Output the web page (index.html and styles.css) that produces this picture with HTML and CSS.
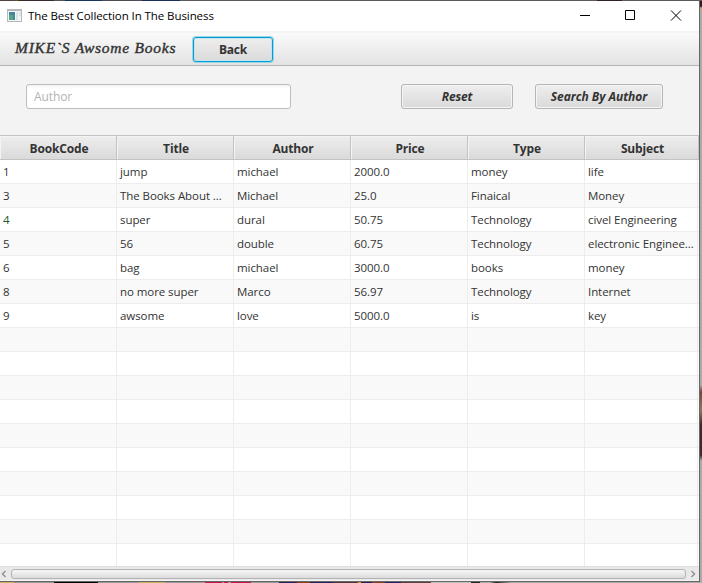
FILE: index.html
```html
<!DOCTYPE html>
<html lang="en">
<head>
<meta charset="utf-8">
<title>The Best Collection In The Business</title>
<link rel="stylesheet" href="styles.css">
</head>
<body>
<div class="desktop">
<main class="window">
  <header class="titlebar">
    <svg class="app-icon" width="15" height="13" viewBox="0 0 15 13"><path fill="#b5b9bb" d="M0 0h15v13H0z"/><path fill="#f4f4f4" d="M1 2h13v10H1z"/><path fill="#4785a0" d="M2 3h6v8H2z"/><path fill="#55a982" d="M2 6h4v5H2z"/><path fill="#dce2e7" d="M9 3h2v8H9zM12 3h2v4h-2z"/></svg>
    <span class="caption">The Best Collection In The Business</span>
    <svg class="controls" width="138" height="30" viewBox="0 0 138 30" fill="none" stroke="#000"><path d="M19 14.500h10M64.500 9.500h9v9h-9zM110 9.500l10 10M120 9.500l-10 10"/></svg>
  </header>
  <nav class="toolbar"><h1>MIKE`S Awsome Books</h1><button class="btn back">Back</button></nav>
  <section class="search">
    <input class="author" type="text" placeholder="Author">
    <button class="btn reset">Reset</button>
    <button class="btn by-author">Search By Author</button>
  </section>
  <section class="table">
    <div class="row head"><span>BookCode</span><span>Title</span><span>Author</span><span>Price</span><span>Type</span><span>Subject</span></div>
    <div class="row"><span>1</span><span>jump</span><span>michael</span><span>2000.0</span><span>money</span><span>life</span></div>
    <div class="row"><span>3</span><span>The Books About ...</span><span>Michael</span><span>25.0</span><span>Finaical</span><span>Money</span></div>
    <div class="row"><span class="green">4</span><span>super</span><span>dural</span><span>50.75</span><span>Technology</span><span>civel Engineering</span></div>
    <div class="row"><span>5</span><span>56</span><span>double</span><span>60.75</span><span>Technology</span><span>electronic Enginee...</span></div>
    <div class="row"><span>6</span><span>bag</span><span>michael</span><span>3000.0</span><span>books</span><span>money</span></div>
    <div class="row"><span>8</span><span>no more super</span><span>Marco</span><span>56.97</span><span>Technology</span><span>Internet</span></div>
    <div class="row"><span>9</span><span>awsome</span><span>love</span><span>5000.0</span><span>is</span><span>key</span></div>
    <div class="row"><span></span><span></span><span></span><span></span><span></span><span></span></div>
    <div class="row"><span></span><span></span><span></span><span></span><span></span><span></span></div>
    <div class="row"><span></span><span></span><span></span><span></span><span></span><span></span></div>
    <div class="row"><span></span><span></span><span></span><span></span><span></span><span></span></div>
    <div class="row"><span></span><span></span><span></span><span></span><span></span><span></span></div>
    <div class="row"><span></span><span></span><span></span><span></span><span></span><span></span></div>
    <div class="row"><span></span><span></span><span></span><span></span><span></span><span></span></div>
    <div class="row"><span></span><span></span><span></span><span></span><span></span><span></span></div>
    <div class="row"><span></span><span></span><span></span><span></span><span></span><span></span></div>
    <div class="row"><span></span><span></span><span></span><span></span><span></span><span></span></div>
  </section>
  <footer class="scrollbar">
    <svg width="11" height="12" viewBox="0 0 11 12" fill="none" stroke="#8b8b8b" stroke-width="1.300"><path d="M5.500 3L2.500 6l3 3"/></svg>
    <div class="thumb"></div>
    <svg width="11" height="12" viewBox="0 0 11 12" fill="none" stroke="#8b8b8b" stroke-width="1.300"><path d="M5.500 3l3 3-3 3"/></svg>
  </footer>
</main>
</div>
</body>
</html>
```
FILE: styles.css
```css
* { box-sizing: border-box; }
body { margin: 0; font: 12px "Open Sans", "Noto Sans", sans-serif; color: #333; overflow: hidden; }
.desktop {
  width: 702px; height: 583px; padding-top: 1px;
  background:
    linear-gradient(90deg, #4c4543 0 15px, #6b5420 15px 18px, #382d2c 18px 54px, #555 54px 65px, #17365c 65px 102px, #514d52 102px 142px, #172f57 142px 180px, #5b5b5b 180px 597px, #2e2224 597px 622px, #5b5b5b 622px) 0 0 / 702px 1px no-repeat,
    linear-gradient(#33191a 0 6px, #c0a88c 8px, #aaa 14px 385px, #6b4a3c 392px, #8c7a62 410px, #3b2c29 425px 455px, #aaa 461px) 700px 0 / 2px 583px no-repeat,
    linear-gradient(90deg, #c8b45d 0 14px, #999 14px 54px, #000 54px 98px, #999 98px 138px, #c8b45d 138px 165px, #999 165px 205px, #c81452 205px 222px, #999 222px 224px, #c81452 224px 228px, #999 228px 231px, #c81452 231px 251px, #999 251px 279px, #22225c 279px 297px, #8a3d1b 297px 310px, #22225c 310px 332px, #4b3a35 332px 358px, #d0a020 358px 361px, #22225c 361px 372px, #8a3d1b 372px 385px, #22225c 385px 401px, #54443e 401px 431px, #c2c2c2 431px 471px, #222 471px 480px, #aaa 480px 490px, #222 496px, #aaa 512px) 0 582px / 702px 1px no-repeat,
    #aaa;
}
.window { width: 700px; height: 581px; border: solid #666; border-width: 0 1px 1px 0; background: #f3f3f3; }
.titlebar { height: 30px; display: flex; align-items: center; padding-left: 7px; background: #fff; color: #000; }
.app-icon { margin-top: -2px; }
.caption { margin: -2px 0 0 6px; font-size: 11.500px; letter-spacing: -.08px; white-space: nowrap; }
.controls { margin-left: auto; }
.toolbar { height: 35px; display: flex; align-items: flex-start; padding-left: 15px; border-top: 2px solid #f3f3f3; border-bottom: 1px solid #b5b5b5; background: linear-gradient(#fafafa, #e3e3e3); }
h1 { width: 178px; margin: 4px 0 0; font: italic 15.500px/22px "Liberation Serif", serif; -webkit-text-stroke: .4px #333; white-space: nowrap; letter-spacing: .75px; }
.btn { height: 25px; padding: 0; border: 1px solid #b5b5b5; border-radius: 3px; background: linear-gradient(#eee, #dadada); box-shadow: inset 0 0 0 1px #f5f5f5; color: #333; font: bold 12px/22px "Open Sans", sans-serif; letter-spacing: -.2px; }
.back { width: 80px; height: 25px; margin-top: 4px; border: 1px solid #039ed3; box-shadow: 0 0 0 1px #9dd3e7, inset 0 0 0 1px #c3e4ef; }
.search { height: 69px; display: flex; padding: 18px 0 0 26px; }
.author { width: 265px; height: 25px; padding: 0 7px; border: 1px solid #bdbdbd; border-radius: 3px; outline: 0; background: linear-gradient(#f4f4f4, #fff 4px); font: 12px "Open Sans", sans-serif; letter-spacing: -.1px; }
.author::placeholder { color: #b3b3b3; opacity: 1; }
.reset { width: 112px; margin-left: 110px; font-style: italic; }
.by-author { width: 128px; margin-left: 22px; font-style: italic; letter-spacing: -.05px; }
.table { height: 431px; overflow: hidden; background: #fff; }
.row { height: 24px; display: grid; grid-template-columns: repeat(5, 117px) 113px; border-bottom: 1px solid #ededed; font-size: 11.500px; line-height: 23px; letter-spacing: -.07px; }
.row:nth-child(odd) { background: #f9f9f9; }
.row span { padding-left: 3px; border-right: 1px solid #ededed; white-space: nowrap; overflow: hidden; }
.row .green { color: #205a2c; }
.table .head { height: 25px; grid-template-columns: repeat(5, 117px) 114px; border: solid #c3c3c3; border-width: 1px 0; background: linear-gradient(#eee, #dadada); font-size: 12px; font-weight: bold; line-height: 25px; text-align: center; letter-spacing: -.15px; }
.table .head span { padding-left: 2px; border-right: 1px solid #c3c3c3; box-shadow: inset 1px 1px #f4f4f4; }
.scrollbar { height: 14px; display: flex; align-items: center; padding-right: 2px; border-top: 1px solid #ddd; background: #e9e9e9; }
.thumb { flex: 1; height: 10px; border: 1px solid #b3b3b3; border-radius: 3px; background: linear-gradient(#f6f6f6, #dcdcdc); }
```
